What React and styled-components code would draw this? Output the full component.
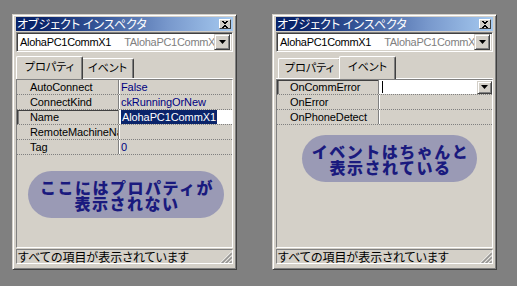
import React from 'react';
import styled, { createGlobalStyle } from 'styled-components';

const GlobalStyle = createGlobalStyle`
  html, body {
    margin: 0;
    background: #808080;
  }
  body {
    font-family: "Liberation Sans", "Noto Sans CJK JP", sans-serif;
    font-size: 11px;
  }
`;

const Stage = styled.div`
  display: flex;
  gap: 35px;
  padding: 14px 0 0 12px;
  height: 286px;
  box-sizing: border-box;
`;

const Window = styled.div`
  width: 225px;
  height: 256px;
  box-sizing: border-box;
  background: #d4d0c8;
  border: 1px solid;
  border-color: #d4d0c8 #404040 #404040 #d4d0c8;
  box-shadow: inset 1px 1px #fff, inset -1px -1px #808080;
  padding: 2px 3px 5px;
  display: flex;
  flex-direction: column;
`;

const TitleBar = styled.div`
  height: 14px;
  flex: none;
  background: linear-gradient(to right, #0a246a 0%, #0a246a 12%, #3a5a9c 40%, #7898cc 70%, #a6caf0 100%);
  display: flex;
  align-items: center;
  justify-content: space-between;
  padding: 0 2px 0 1px;
  color: #fff;
`;

const Jp = styled.span`
  font-family: "Noto Sans CJK JP", sans-serif;
  font-feature-settings: "palt";
  font-size: ${p => p.size || 12}px;
  line-height: 14px;
  white-space: nowrap;
`;

const SmallButton = styled.div`
  width: 12px;
  height: 10px;
  box-sizing: border-box;
  background: #d4d0c8;
  border: 1px solid;
  border-color: #fff #404040 #404040 #fff;
  display: flex;
  align-items: center;
  justify-content: center;
`;

const Combo = styled.div`
  margin-top: 1px;
  height: 20px;
  flex: none;
  box-sizing: border-box;
  background: #fff;
  border: 1px solid;
  border-color: #808080 #fff #fff #808080;
  box-shadow: inset 1px 1px #404040, inset -1px -1px #d4d0c8;
  display: flex;
  align-items: center;
  padding: 0 2px 0 3px;
  overflow: hidden;
  font-size: 11px;
  letter-spacing: -0.3px;
`;

const ComboName = styled.span`
  white-space: nowrap;
  color: #000;
`;

const ComboType = styled.span`
  white-space: nowrap;
  color: #808080;
  margin-left: 13px;
  flex: 1;
  overflow: hidden;
`;

const DropButton = styled.div`
  width: ${p => p.w || 16}px;
  height: ${p => p.h || 16}px;
  flex: none;
  box-sizing: border-box;
  background: #d4d0c8;
  border: 1px solid;
  border-color: #d4d0c8 #404040 #404040 #d4d0c8;
  box-shadow: inset 1px 1px #fff, inset -1px -1px #808080;
  display: flex;
  align-items: center;
  justify-content: center;
  margin-left: ${p => (p.push ? 'auto' : '0')};
`;

const TabRow = styled.div`
  margin-top: 3px;
  height: 23px;
  flex: none;
  display: flex;
  align-items: flex-end;
  padding-left: 2px;
`;

const Tab = styled.div`
  height: ${p => (p.active ? 23 : 20)}px;
  box-sizing: border-box;
  margin: 0 ${p => (p.active ? -2 : 0)}px ${p => (p.active ? -1 : 0)}px;
  padding: ${p => (p.active ? '2px 8px 0' : '1px 6px 0')};
  background: #d4d0c8;
  border-top: 1px solid #fff;
  border-left: 1px solid #fff;
  border-right: 1px solid #404040;
  box-shadow: inset -1px 0 #808080;
  border-radius: 2px 2px 0 0;
  position: relative;
  z-index: ${p => (p.active ? 1 : 0)};
  color: #000;
`;

const Sheet = styled.div`
  flex: 1;
  display: flex;
  flex-direction: column;
  border-top: 1px solid #fff;
`;

const Panel = styled.div`
  flex: 1;
  border: 1px solid;
  border-color: #808080 #fff #fff #808080;
  display: flex;
  flex-direction: column;
`;

const Row = styled.div`
  display: grid;
  grid-template-columns: 102px 1fr;
  height: 15px;
  box-sizing: border-box;
  border-bottom: 1px dotted #808080;
  font-size: 11px;
  letter-spacing: -0.1px;
`;

const NameCell = styled.div`
  padding-left: 13px;
  line-height: 14px;
  white-space: nowrap;
  overflow: hidden;
  border-right: 1px solid #808080;
  box-shadow: ${p => (p.sunken ? 'inset 1px 1px #404040, inset 2px 0 #808080' : 'none')};
  color: #000;
`;

const ValueCell = styled.div`
  border-left: 1px solid #fff;
  padding-left: 1px;
  line-height: 14px;
  white-space: nowrap;
  overflow: hidden;
  color: #000080;
  background: ${p => (p.editing ? '#fff' : 'transparent')};
  display: flex;
  align-items: center;
`;

const Selected = styled.span`
  background: #0a246a;
  color: #fff;
  padding: 0 1px;
  line-height: 14px;
`;

const Caret = styled.span`
  width: 1px;
  height: 12px;
  background: #000;
  margin-left: 1px;
`;

const Oval = styled.div`
  margin: ${p => p.top}px 0 0 ${p => p.left}px;
  width: ${p => p.w}px;
  height: 47px;
  border-radius: 24px;
  background: #9a9ab5;
  display: flex;
  flex-direction: column;
  align-items: center;
  justify-content: center;
  color: #1a1a7e;
  font-family: "Noto Sans CJK JP", sans-serif;
  font-weight: 900;
  font-size: 16px;
  letter-spacing: 1.5px;
`;

const OvalLine = styled.span`
  display: block;
  height: 16px;
  line-height: 16px;
  padding-left: 2px;
`;

const StatusBar = styled.div`
  margin-top: 1px;
  height: 15px;
  flex: none;
  box-sizing: border-box;
  border: 1px solid;
  border-color: #808080 #fff #fff #808080;
  display: flex;
  align-items: center;
  padding-left: 1px;
  color: #000;
`;

const Grip = styled.svg`
  margin-left: auto;
  align-self: flex-end;
  flex: none;
`;

const CloseX = () => (
  <svg width="8" height="7" viewBox="0 0 8 7">
    <path d="M1 0h2v1h2V0h2v1H6v1H5v1H4v1h1v1h1v1h1v1H5V6H3v1H1V6h1V5h1V4h1V3H3V2H2V1H1z" fill="#000" />
  </svg>
);

const DownArrow = () => (
  <svg width="7" height="4" viewBox="0 0 7 4">
    <path d="M0 0h7L3.5 4z" fill="#000" />
  </svg>
);

const SizeGrip = () => (
  <Grip width="12" height="12" viewBox="0 0 12 12">
    {[0, 4, 8].map(o => (
      <g key={o}>
        <line x1={12} y1={o + 0.5} x2={o + 0.5} y2={12} stroke="#fff" strokeWidth="1" />
        <line x1={12} y1={o + 1.5} x2={o + 1.5} y2={12} stroke="#808080" strokeWidth="1" />
        <line x1={12} y1={o + 2.5} x2={o + 2.5} y2={12} stroke="#808080" strokeWidth="1" />
      </g>
    ))}
  </Grip>
);

const properties = [
  { name: 'AutoConnect', value: 'False' },
  { name: 'ConnectKind', value: 'ckRunningOrNew' },
  { name: 'Name', value: 'AlohaPC1CommX1', editing: true },
  { name: 'RemoteMachineName', value: '' },
  { name: 'Tag', value: '0' },
];

const events = [
  { name: 'OnCommError', editing: true },
  { name: 'OnError' },
  { name: 'OnPhoneDetect' },
];

const Inspector = ({ page, children }) => (
  <Window>
    <TitleBar>
      <Jp>オブジェクト インスペクタ</Jp>
      <SmallButton><CloseX /></SmallButton>
    </TitleBar>
    <Combo>
      <ComboName>AlohaPC1CommX1</ComboName>
      <ComboType>TAlohaPC1CommX1</ComboType>
      <DropButton><DownArrow /></DropButton>
    </Combo>
    <TabRow>
      <Tab active={page === 'props'}><Jp size={11}>プロパティ</Jp></Tab>
      <Tab active={page === 'events'}><Jp size={11}>イベント</Jp></Tab>
    </TabRow>
    <Sheet>
      <Panel>{children}</Panel>
    </Sheet>
    <StatusBar>
      <Jp>すべての項目が表示されています</Jp>
      <SizeGrip />
    </StatusBar>
  </Window>
);

export default function App() {
  return (
    <>
      <GlobalStyle />
      <Stage>
        <Inspector page="props">
          {properties.map(p => (
            <Row key={p.name}>
              <NameCell sunken={p.editing}>{p.name}</NameCell>
              <ValueCell editing={p.editing}>
                {p.editing ? <Selected>{p.value}</Selected> : p.value}
              </ValueCell>
            </Row>
          ))}
          <Oval top={16} left={11} w={196}>
            <OvalLine>ここにはプロパティが</OvalLine>
            <OvalLine>表示されない</OvalLine>
          </Oval>
        </Inspector>
        <Inspector page="events">
          {events.map(e => (
            <Row key={e.name}>
              <NameCell sunken={e.editing}>{e.name}</NameCell>
              <ValueCell editing={e.editing}>
                {e.editing && (
                  <>
                    <Caret />
                    <DropButton push w={15} h={13}><DownArrow /></DropButton>
                  </>
                )}
              </ValueCell>
            </Row>
          ))}
          <Oval top={10} left={25} w={175}>
            <OvalLine>イベントはちゃんと</OvalLine>
            <OvalLine>表示されている</OvalLine>
          </Oval>
        </Inspector>
      </Stage>
    </>
  );
}
